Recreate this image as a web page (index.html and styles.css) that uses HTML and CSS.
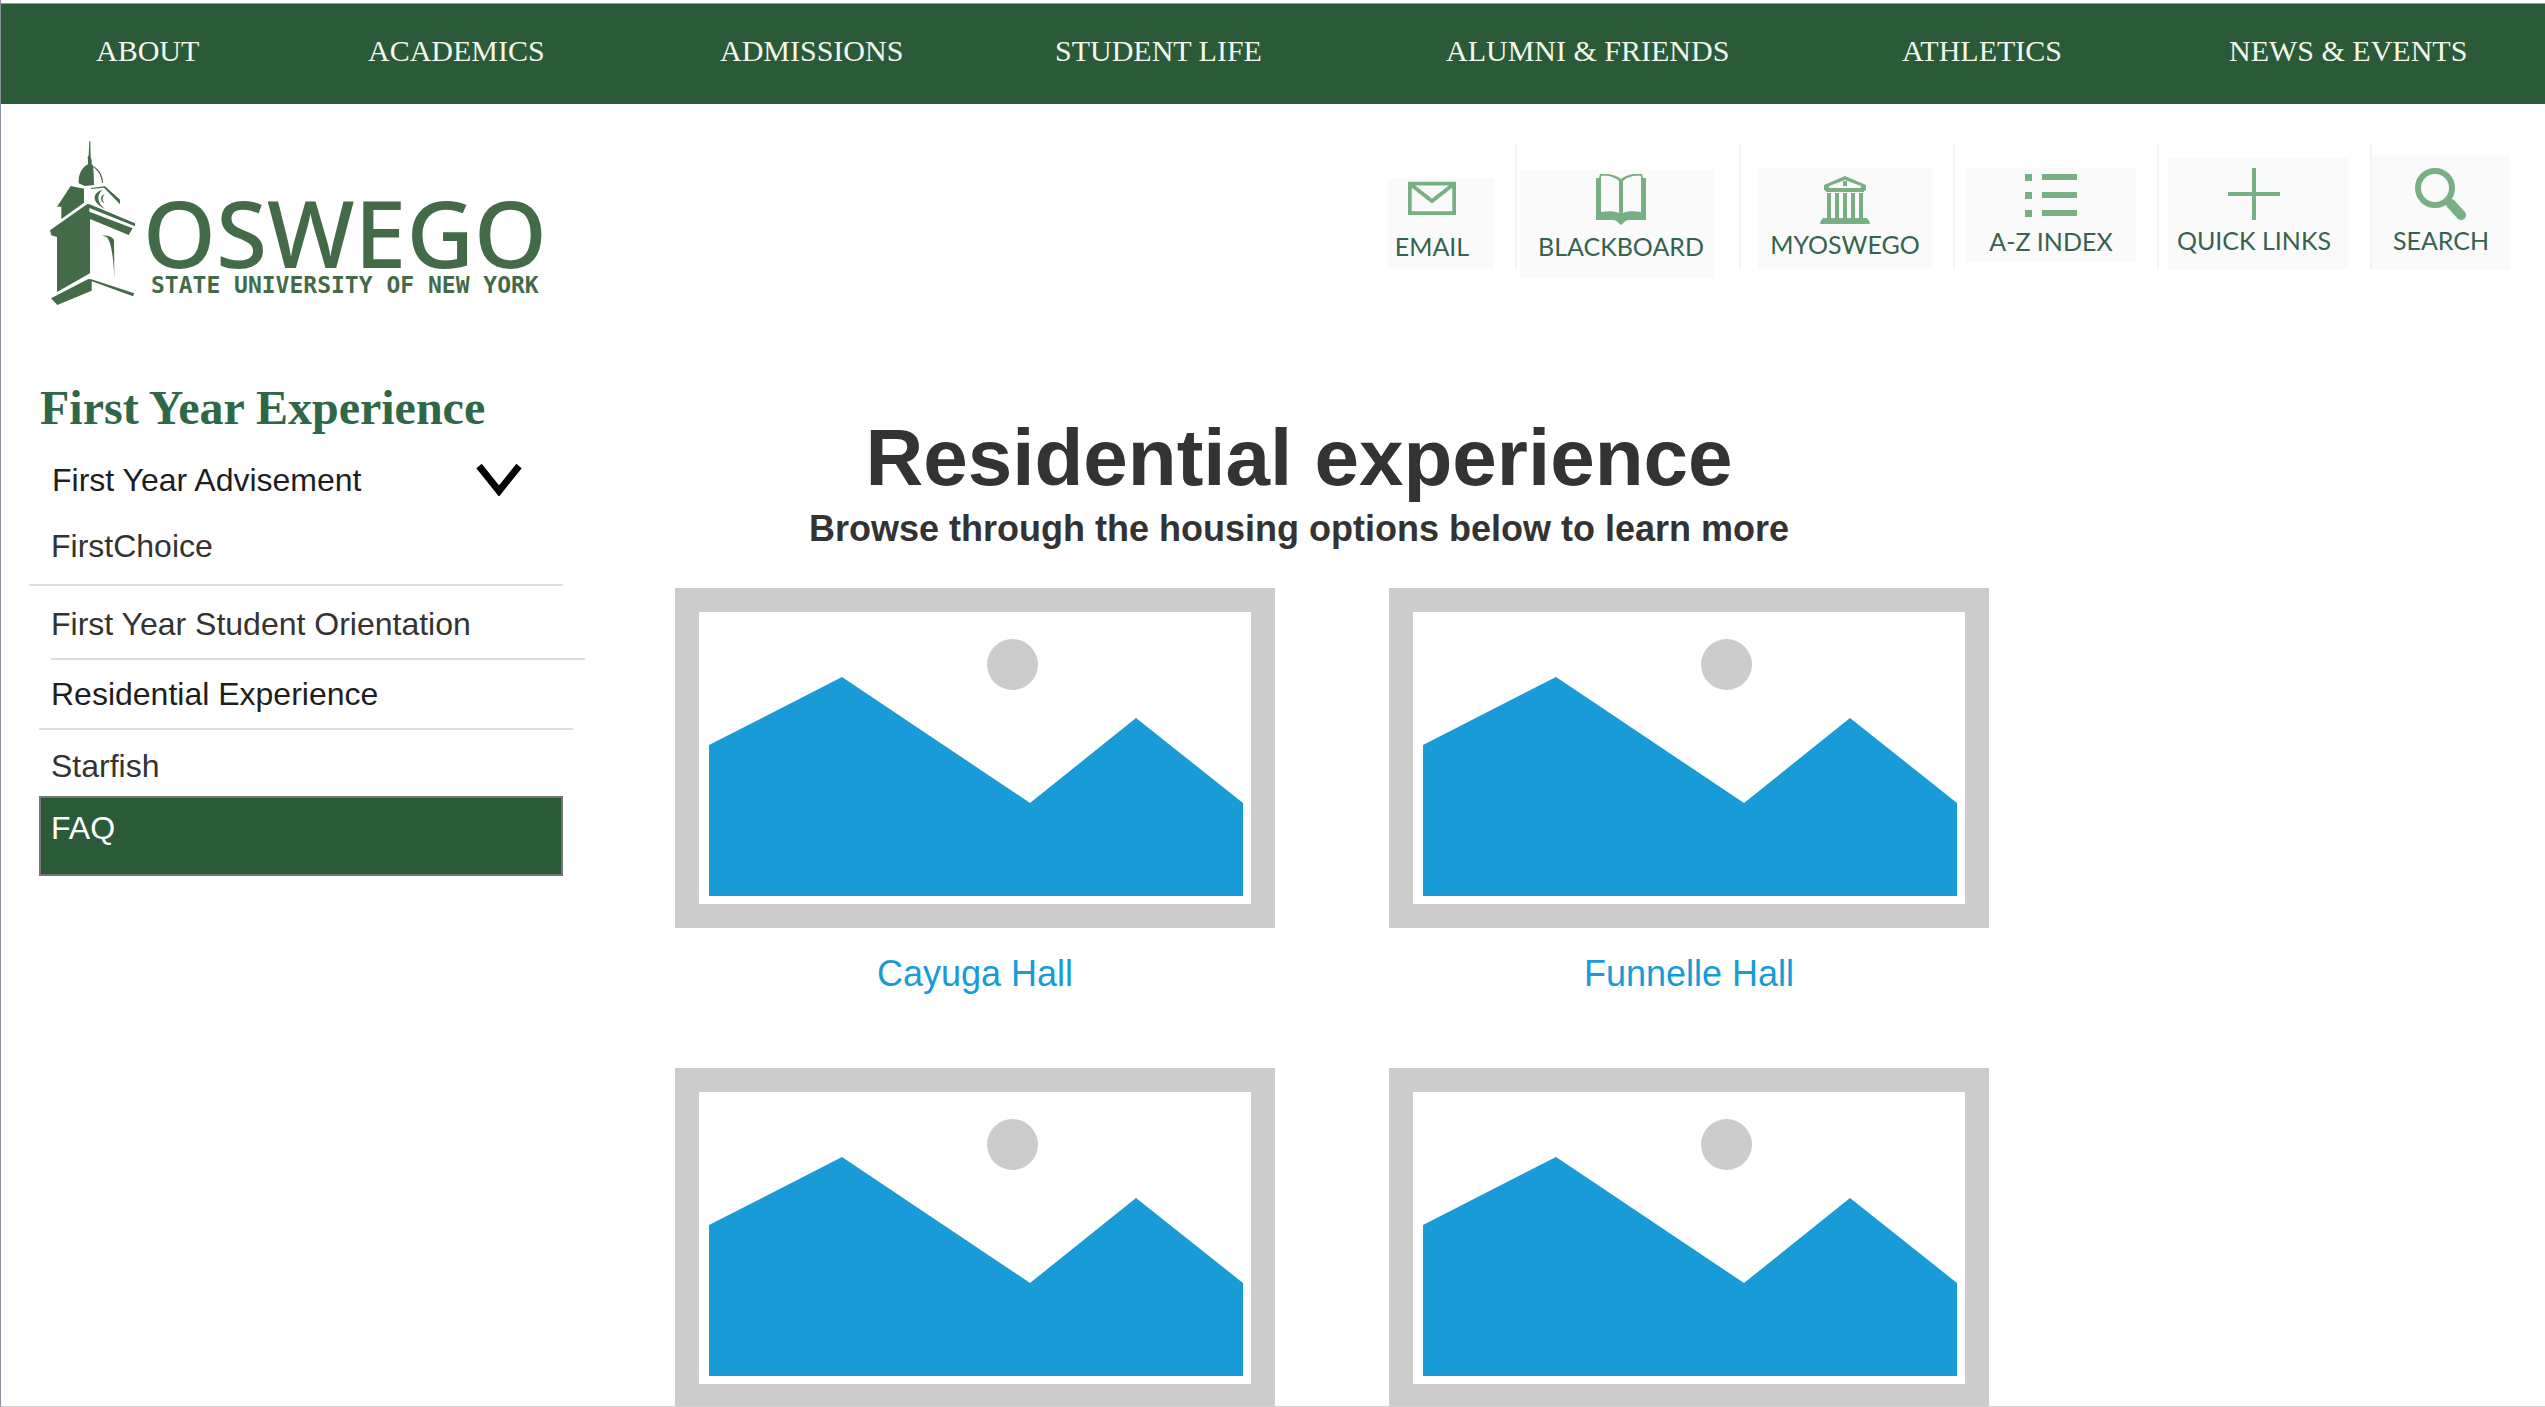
FILE: index.html
```html
<!DOCTYPE html>
<html lang="en">
<head>
<meta charset="utf-8">
<title>Residential experience - SUNY Oswego</title>
<link rel="stylesheet" href="styles.css">
</head>
<body>
<svg class="defs" aria-hidden="true">
  <symbol id="placeholder" viewBox="0 0 600 340">
    <path fill="#ccc" d="M0 0h600v340H0z"/>
    <path fill="#fff" d="M24 24h552v292H24z"/>
    <circle cx="337.500" cy="76.500" r="25.500" fill="#ccc"/>
    <path fill="#189bd6" d="M34 157 167 89 355 215 461 130 568 215V308H34z"/>
  </symbol>
</svg>
<div class="page">
  <nav class="main-nav" aria-label="Main">
    <a href="#">ABOUT</a>
    <a href="#">ACADEMICS</a>
    <a href="#">ADMISSIONS</a>
    <a href="#">STUDENT LIFE</a>
    <a href="#">ALUMNI &amp; FRIENDS</a>
    <a href="#">ATHLETICS</a>
    <a href="#">NEWS &amp; EVENTS</a>
  </nav>

  <header class="header">
    <a class="logo" href="#">
      <svg class="tower" viewBox="18 18 258 495" aria-hidden="true">
        <g fill="#446b47">
          <path d="M136 18l3 1 1 48 3 8v12l4 5c2 14 3 40 3 58l-28 3-18-8c-2-26 10-48 28-57v-12l-1-9 3-6z"/>
          <path d="M139 90c22 6 38 28 38 54h-3c-1-22-14-44-35-52z"/>
          <path d="M80 153l40 8v42l-68 49v-37H39z"/>
          <path d="M141 159l42-5 45 40v14l-48-50-39 4z"/>
          <path d="M175 165c-30 8-34 36 7 56-24-18-24-42-7-56z"/>
          <path d="M183 177c-15 4-16 22-1 28-8-8-8-20 1-28z"/>
          <path d="M18 286l112-79 7 1 136 57v9L136 219v11l130 50-12 20-116-48v163L39 471V306l-17-5z"/>
          <path d="M175 302c14-2 27 2 35 12l1 116c-3-60-8-108-23-124z"/>
          <path d="M21 490l112-58 9 1 129 42-4 9-124-45v28L40 510z"/>
        </g>
      </svg>
      <span class="wordmark">
        <span class="wordmark-name">OSWEGO</span>
        <span class="wordmark-tag">STATE UNIVERSITY OF NEW YORK</span>
      </span>
    </a>
    <ul class="tools">
      <li><a class="tile tile-email" href="#">
        <svg viewBox="0 0 52 52"><path d="M2 6h48v32H2zM3 7l23 18L49 7" fill="none" stroke="#78b083" stroke-width="4"/></svg>
        <span>EMAIL</span></a></li>
      <li><a class="tile tile-blackboard" href="#">
        <svg viewBox="0 0 52 52"><path fill="#78b083" fill-rule="evenodd" d="M1 4h3l1-4c8-1 16 1 21 5 5-4 13-6 21-5l1 4h3v42H34c-4 0-5 3-8 5-3-2-4-5-8-5H1zM6 2v36c7-1 14-1 18 1V7C20 3 13 1 6 2zm40 0c-7-1-14 1-18 5v32c4-2 11-2 18-1z"/></svg>
        <span>BLACKBOARD</span></a></li>
      <li><a class="tile tile-myoswego" href="#">
        <svg viewBox="0 0 52 52"><path fill="#78b083" fill-rule="evenodd" d="M26 4l21 9v5l-2 1v1H7v-1l-2-1v-5zm0 4l-16 6v2h32v-2zM24 9h4v5h-4zM8 21h4v25H8zm8 0h4v25h-4zm8 0h4v25h-4zm8 0h4v25h-4zm8 0h4v25h-4zM4 46h44l1 2H3zM2 48h48l1 4H1z"/></svg>
        <span>MYOSWEGO</span></a></li>
      <li><a class="tile tile-index" href="#">
        <svg viewBox="0 0 52 52"><path fill="#78b083" d="M0 5h7v7H0zm17 0h35v6H17zM0 23h7v7H0zm17 0h35v6H17zM0 41h7v7H0zm17 0h35v6H17z"/></svg>
        <span>A-Z INDEX</span></a></li>
      <li><a class="tile tile-quick" href="#">
        <svg viewBox="0 0 52 52"><path fill="#78b083" d="M24 0h4v24h24v4H28v24h-4V28H0v-4h24z"/></svg>
        <span>QUICK LINKS</span></a></li>
      <li><a class="tile tile-search" href="#">
        <svg viewBox="0 0 52 52"><circle cx="20" cy="20" r="17" fill="none" stroke="#78b083" stroke-width="6"/><path d="M32 32l4 4" stroke="#78b083" stroke-width="6"/><path d="M36 36l10 11" stroke="#78b083" stroke-width="10" stroke-linecap="round"/></svg>
        <span>SEARCH</span></a></li>
    </ul>
  </header>

  <div class="body">
    <aside class="sidebar">
      <h2>First Year Experience</h2>
      <ul class="side-nav">
        <li class="item-advisement"><a class="dark" href="#">First Year Advisement</a>
          <button type="button" aria-label="Expand First Year Advisement"><svg viewBox="0 0 46 32"><path d="M3 2l20 25L43 2" fill="none" stroke="#000" stroke-width="7"/></svg></button></li>
        <li class="item-choice"><a href="#">FirstChoice</a></li>
        <li class="item-orientation"><a href="#">First Year Student Orientation</a></li>
        <li class="item-residential"><a class="dark" href="#">Residential Experience</a></li>
        <li class="item-starfish"><a href="#">Starfish</a></li>
        <li class="item-faq"><a href="#">FAQ</a></li>
      </ul>
    </aside>
    <main class="main">
      <h1>Residential experience</h1>
      <p class="lead">Browse through the housing options below to learn more</p>
      <div class="halls">
        <a class="hall" href="#"><svg viewBox="0 0 600 340"><use href="#placeholder"/></svg><span>Cayuga Hall</span></a>
        <a class="hall" href="#"><svg viewBox="0 0 600 340"><use href="#placeholder"/></svg><span>Funnelle Hall</span></a>
        <a class="hall" href="#" aria-label="Residence hall"><svg viewBox="0 0 600 340"><use href="#placeholder"/></svg></a>
        <a class="hall" href="#" aria-label="Residence hall"><svg viewBox="0 0 600 340"><use href="#placeholder"/></svg></a>
      </div>
    </main>
  </div>
</div>
</body>
</html>
```
FILE: styles.css
```css
* { box-sizing: border-box; }
body {
  margin: 0;
  background: #fff;
  font-family: "Liberation Sans", Arial, sans-serif;
  color: #333;
}
a { color: inherit; text-decoration: none; }
ul { list-style: none; margin: 0; padding: 0; }
h1, h2, p { margin: 0; }
svg { display: block; }
.defs { position: absolute; width: 0; height: 0; }

.page {
  height: 100vh;
  overflow: hidden;
  border-left: 1px solid #8b909c;
  border-bottom: 1px solid #d0d0d0;
  padding-top: 3px;
}

/* Top navigation */
.main-nav {
  display: grid;
  grid-template-columns: 272fr 352fr 335fr 391fr 456fr 327fr 316fr;
  padding: 0 0 6px 95px;
  border-top: 1px solid #999;
  background: #2a5a37;
  color: #f4f7ec;
  font-family: "Liberation Serif", "Times New Roman", serif;
  font-size: 30px;
  line-height: 94px;
  white-space: nowrap;
}

/* Logo and tools */
.header {
  display: flex;
  justify-content: space-between;
  align-items: flex-start;
  padding: 37px 35px 74px 49px;
}
.logo { display: flex; color: #446b47; }
.tower { width: 86px; height: 165px; }
.wordmark { display: flex; flex-direction: column; padding: 53px 0 0 7px; }
.wordmark-name {
  font-family: "Noto Sans", sans-serif;
  font-size: 93px;
  line-height: 76px;
  font-weight: 500;
}
.wordmark-tag {
  padding-left: 8px;
  font-family: "DejaVu Sans Mono", monospace;
  font-size: 23px;
  line-height: 30px;
  font-weight: 700;
}

.tools { display: flex; padding-top: 3px; }
.tools li { height: 125px; border-left: 2px solid #f3f3f3; }
.tools li:first-child { border-left: 0; }
.tile {
  display: flex;
  flex-direction: column;
  align-items: center;
  gap: 6px;
  background: #fafafa;
  color: #35634f;
  font-family: Lato, sans-serif;
  font-size: 25px;
  line-height: 28px;
}
.tile svg { width: 52px; height: 52px; }
.tile-email { width: 106px; height: 90px; margin: 34px 21px 0 0; padding-right: 18px; }
.tile-email svg { height: 48px; overflow: visible; }
.tile-blackboard { width: 194px; height: 108px; margin: 26px 25px 0 3px; padding: 4px 0 0 8px; }
.tile-myoswego { width: 174px; height: 100px; margin: 24px 21px 0 17px; padding-top: 4px; }
.tile-index { width: 170px; height: 94px; margin: 24px 21px 0 11px; padding-top: 1px; }
.tile-quick { width: 180px; height: 112px; margin: 14px 22px 0 9px; padding: 10px 8px 0 0; }
.tile-search { width: 138px; height: 114px; margin-top: 12px; padding-top: 12px; }

/* Sidebar */
.body { display: flex; }
.sidebar { width: 600px; flex: none; }
.sidebar h2 {
  padding-left: 39px;
  font-family: "Liberation Serif", "Times New Roman", serif;
  font-size: 48px;
  line-height: 56px;
  color: #2f6848;
}
.side-nav { padding-top: 24px; font-size: 32px; line-height: 40px; }
.side-nav li { width: 534px; border-bottom: 2px solid #dcdcdc; }
.dark { color: #1e1e1e; }
.side-nav .item-advisement {
  display: flex;
  justify-content: space-between;
  align-items: center;
  border: 0;
  padding-right: 12px;
  margin-left: 51px;
  width: 482px;
}
.item-advisement button { border: 0; padding: 0; background: none; }
.item-advisement button svg { width: 46px; height: 32px; }
.item-choice { margin-left: 28px; padding: 26px 0 18px 22px; }
.item-orientation { margin-left: 50px; padding: 18px 0 14px; }
.item-residential { margin-left: 38px; padding: 14px 0 14px 12px; }
.side-nav .item-starfish { margin-left: 38px; padding: 16px 0 10px 12px; border: 0; }
.side-nav .item-faq {
  width: 524px;
  margin-left: 38px;
  padding: 10px 10px 26px;
  border: 2px solid #757575;
  background: #2a5a37;
  color: #fff;
}

/* Main content */
.main { width: 1396px; padding-top: 33px; }
.main h1, .lead { text-align: center; }
.main h1 { font-size: 80px; line-height: 90px; }
.lead { font-size: 36px; line-height: 52px; font-weight: 700; }
.halls {
  display: grid;
  grid-template-columns: 600px 600px;
  column-gap: 114px;
  row-gap: 64px;
  padding: 33px 0 0 74px;
}
.hall { color: #189bd6; font-size: 36px; text-align: center; }
.hall svg { width: 600px; height: 340px; }
.hall span { display: block; padding-top: 16px; line-height: 60px; }
```
